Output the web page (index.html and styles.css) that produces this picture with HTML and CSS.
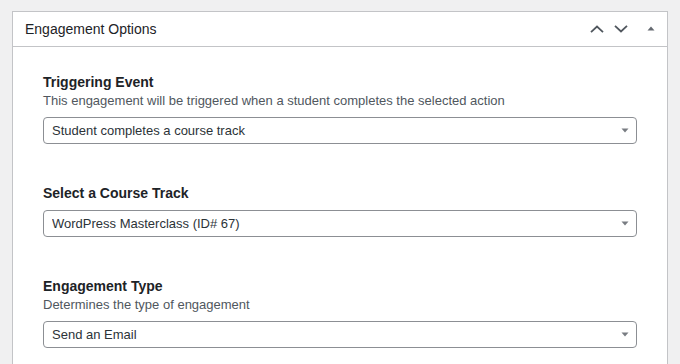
FILE: index.html
```html
<!DOCTYPE html>
<html lang="en">
<head>
    <meta charset="UTF-8">
    <meta name="viewport" content="width=device-width, initial-scale=1.0">
    <title>Engagement Options</title>
    <link rel="stylesheet" href="styles.css">
</head>
<body>
    <div class="postbox">
        <div class="postbox-header">
            <h2 class="postbox-title">Engagement Options</h2>
            <div class="handle-actions">
                <button class="handle-btn" aria-label="Move up">
                    <svg width="14" height="8" viewBox="0 0 14 8"><path d="M1 7.2 L7 1.5 L13 7.2" fill="none" stroke="#50575e" stroke-width="1.8"/></svg>
                </button>
                <button class="handle-btn" aria-label="Move down">
                    <svg width="14" height="8" viewBox="0 0 14 8"><path d="M1 0.8 L7 6.5 L13 0.8" fill="none" stroke="#50575e" stroke-width="1.8"/></svg>
                </button>
                <button class="handle-btn toggle" aria-label="Toggle panel">
                    <svg width="8" height="5" viewBox="0 0 8 5"><path d="M0.5 4.5 L4 0.5 L7.5 4.5 Z" fill="#646970"/></svg>
                </button>
            </div>
        </div>

        <div class="postbox-inside">
            <div class="field">
                <label class="field-label" for="triggerEvent">Triggering Event</label>
                <p class="field-desc">This engagement will be triggered when a student completes the selected action</p>
                <select id="triggerEvent" class="field-select">
                    <option>Student completes a course track</option>
                </select>
            </div>

            <div class="field">
                <label class="field-label" for="courseTrack">Select a Course Track</label>
                <select id="courseTrack" class="field-select">
                    <option>WordPress Masterclass (ID# 67)</option>
                </select>
            </div>

            <div class="field last">
                <label class="field-label" for="engagementType">Engagement Type</label>
                <p class="field-desc">Determines the type of engagement</p>
                <select id="engagementType" class="field-select">
                    <option>Send an Email</option>
                </select>
            </div>
        </div>
    </div>
</body>
</html>
```

FILE: styles.css
```css
html, body {
    height: 100%;
}

body {
    font-family: "Liberation Sans", Arial, sans-serif;
    margin: 0;
    padding: 11px 12px 0;
    background-color: #f0f0f1;
    color: #1d2327;
    box-sizing: border-box;
    display: flex;
    flex-direction: column;
    overflow: hidden;
}

.postbox {
    flex: 1;
    background-color: #fff;
    border: 1px solid #c3c4c7;
    border-bottom: none;
}

.postbox-header {
    display: flex;
    align-items: center;
    justify-content: space-between;
    height: 34px;
    border-bottom: 1px solid #c3c4c7;
    padding: 0 12px;
}

.postbox-title {
    margin: 0;
    font-size: 14px;
    font-weight: 500;
    color: #1d2327;
}

.handle-actions {
    display: flex;
    align-items: center;
    gap: 10px;
}

.handle-btn {
    display: flex;
    align-items: center;
    justify-content: center;
    background: none;
    border: none;
    padding: 0;
    cursor: pointer;
}

.handle-btn.toggle {
    margin-left: 9px;
    margin-top: -1px;
}

.postbox-inside {
    padding: 25px 30px 0;
}

.field {
    margin-bottom: 39px;
}

.field.last {
    margin-bottom: 0;
}

.field-label {
    display: block;
    font-size: 14px;
    font-weight: bold;
    line-height: 20px;
    color: #1d2327;
}

.field-desc {
    margin: 0;
    font-size: 13px;
    line-height: 18px;
    color: #50575e;
}

.field-select {
    display: block;
    width: 100%;
    height: 27px;
    margin-top: 7px;
    padding: 0 24px 0 8px;
    font-family: inherit;
    font-size: 13px;
    color: #2c3338;
    background-color: #fff;
    background-image: url("data:image/svg+xml;utf8,<svg xmlns='http://www.w3.org/2000/svg' width='8' height='5' viewBox='0 0 8 5'><path d='M0.5 0.5 L7.5 0.5 L4 4.5 Z' fill='%23787c82'/></svg>");
    background-repeat: no-repeat;
    background-position: right 7px center;
    border: 1px solid #8c8f94;
    border-radius: 4px;
    appearance: none;
    -webkit-appearance: none;
}
```
